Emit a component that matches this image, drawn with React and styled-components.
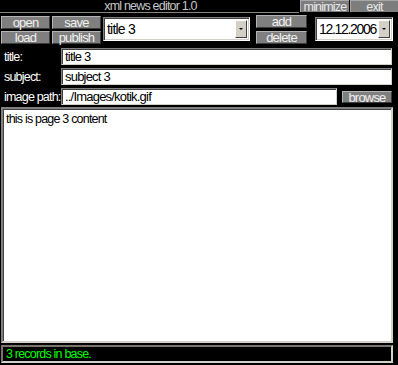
import React from 'react'
import styled, {createGlobalStyle} from "styled-components";

const GlobalStyle = createGlobalStyle`
  html, body {
    margin: 0;
    padding: 0;
    background: #000;
  }
  body {
    font-family: "Liberation Sans", Arial, sans-serif;
    font-size: 12.5px;
    letter-spacing: -0.8px;
  }
`;

const Window = styled.div`
  width: 398px;
  height: 365px;
  background: #000;
  display: flex;
  flex-direction: column;
  overflow: hidden;
  white-space: nowrap;
`;

const TitleBar = styled.div`
  display: flex;
  height: 13px;
`;

const Caption = styled.div`
  flex: 1;
  height: 12px;
  border-bottom: 1px solid #8a857c;
  color: #c8c8c8;
  text-align: center;
  line-height: 12px;
  padding-left: 2px;
`;

const WinButton = styled.div`
  width: ${p => p.w}px;
  height: 11px;
  margin-left: 1px;
  background: #7d7d7d;
  color: #e8e8e8;
  text-align: center;
  line-height: 12px;
  border-top: 1px solid #a8a8a8;
  border-left: 1px solid #a8a8a8;
`;

const Toolbar = styled.div`
  display: flex;
  align-items: flex-start;
  height: 30px;
  margin-top: 2px;
`;

const ButtonColumn = styled.div`
  display: flex;
  flex-direction: column;
  gap: ${p => p.gap}px;
  margin: ${p => p.m};
`;

const Button = styled.div`
  box-sizing: border-box;
  width: ${p => p.w}px;
  height: ${p => p.h || 13}px;
  background: #7f7f7f;
  color: #f0f0f0;
  text-align: center;
  line-height: 12px;
  border: 1px solid;
  border-color: #b4b4b4 #3c3c3c #3c3c3c #b4b4b4;
  font-size: 13px;
`;

const Select = styled.div`
  box-sizing: border-box;
  display: flex;
  width: ${p => p.w}px;
  height: 24px;
  margin: ${p => p.m};
  background: #fff;
  border: 1px solid;
  border-color: #808080 #ffffff #ffffff #808080;
  box-shadow: inset 1px 1px #404040, inset -1px -1px #d4d0c8;
  padding: 2px;
`;

const SelectValue = styled.div`
  flex: 1;
  color: #000;
  font-size: 14px;
  letter-spacing: ${p => p.ls}px;
  line-height: 18px;
  padding-left: 1px;
`;

const Arrow = styled.div`
  box-sizing: border-box;
  width: 12px;
  height: 18px;
  background: #d4d0c8;
  border: 1px solid;
  border-color: #ffffff #404040 #404040 #ffffff;
  display: flex;
  align-items: center;
  justify-content: center;

  &::after {
    content: "";
    border-left: 2px solid transparent;
    border-right: 2px solid transparent;
    border-top: 2px solid #000;
  }
`;

const Form = styled.div`
  display: flex;
  flex-direction: column;
  gap: 3px;
  margin-top: 3px;
`;

const Row = styled.div`
  display: flex;
  align-items: center;
  height: 17px;
`;

const Label = styled.div`
  width: 57px;
  padding-left: 4px;
  color: #fff;
  font-size: 12.5px;
  letter-spacing: -0.8px;
`;

const Input = styled.div`
  box-sizing: border-box;
  width: ${p => p.w}px;
  height: 17px;
  background: #fff;
  color: #000;
  border: 1px solid;
  border-color: #808080 #d4d0c8 #d4d0c8 #808080;
  box-shadow: inset 1px 1px #404040;
  padding-left: 3px;
  line-height: 15px;
  font-size: 13px;
`;

const TextArea = styled.div`
  box-sizing: border-box;
  width: 392px;
  height: 236px;
  margin: 2px 0 0 1px;
  background: #fff;
  color: #000;
  border: 2px solid;
  border-color: #808080 #d4d0c8 #d4d0c8 #808080;
  box-shadow: inset 1px 1px #404040;
  padding: 3px 3px;
`;

const StatusBar = styled.div`
  box-sizing: border-box;
  width: 392px;
  height: 18px;
  margin: 2px 0 0 1px;
  background: #000;
  color: #00ff00;
  border: 2px solid;
  border-color: #7a756c #d4d0c8 #d4d0c8 #7a756c;
  padding-left: 3px;
  line-height: 14px;
`;

export default function App() {
    return (
        <Window>
            <GlobalStyle/>
            <TitleBar>
                <Caption>xml news editor 1.0</Caption>
                <WinButton w={48}>minimize</WinButton>
                <WinButton w={47}>exit</WinButton>
            </TitleBar>
            <Toolbar>
                <ButtonColumn gap={2} m="1px 0 0 1px">
                    <Button w={49}>open</Button>
                    <Button w={49}>load</Button>
                </ButtonColumn>
                <ButtonColumn gap={2} m="1px 0 0 2px">
                    <Button w={49}>save</Button>
                    <Button w={49}>publish</Button>
                </ButtonColumn>
                <Select w={147} m="2px 0 0 2px">
                    <SelectValue ls={-0.8}>title 3</SelectValue>
                    <Arrow/>
                </Select>
                <ButtonColumn gap={3} m="0 0 0 6px">
                    <Button w={51}>add</Button>
                    <Button w={51}>delete</Button>
                </ButtonColumn>
                <Select w={78} m="2px 0 0 8px">
                    <SelectValue ls={-1.3}>12.12.2006</SelectValue>
                    <Arrow/>
                </Select>
            </Toolbar>
            <Form>
                <Row>
                    <Label>title:</Label>
                    <Input w={331}>title 3</Input>
                </Row>
                <Row>
                    <Label>subject:</Label>
                    <Input w={331}>subject 3</Input>
                </Row>
                <Row>
                    <Label>image path:</Label>
                    <Input w={276}>../Images/kotik.gif</Input>
                    <ButtonColumn gap={0} m="0 0 0 5px">
                        <Button w={50} h={12}>browse</Button>
                    </ButtonColumn>
                </Row>
            </Form>
            <TextArea>this is page 3 content</TextArea>
            <StatusBar>3 records in base.</StatusBar>
        </Window>
    );
}
